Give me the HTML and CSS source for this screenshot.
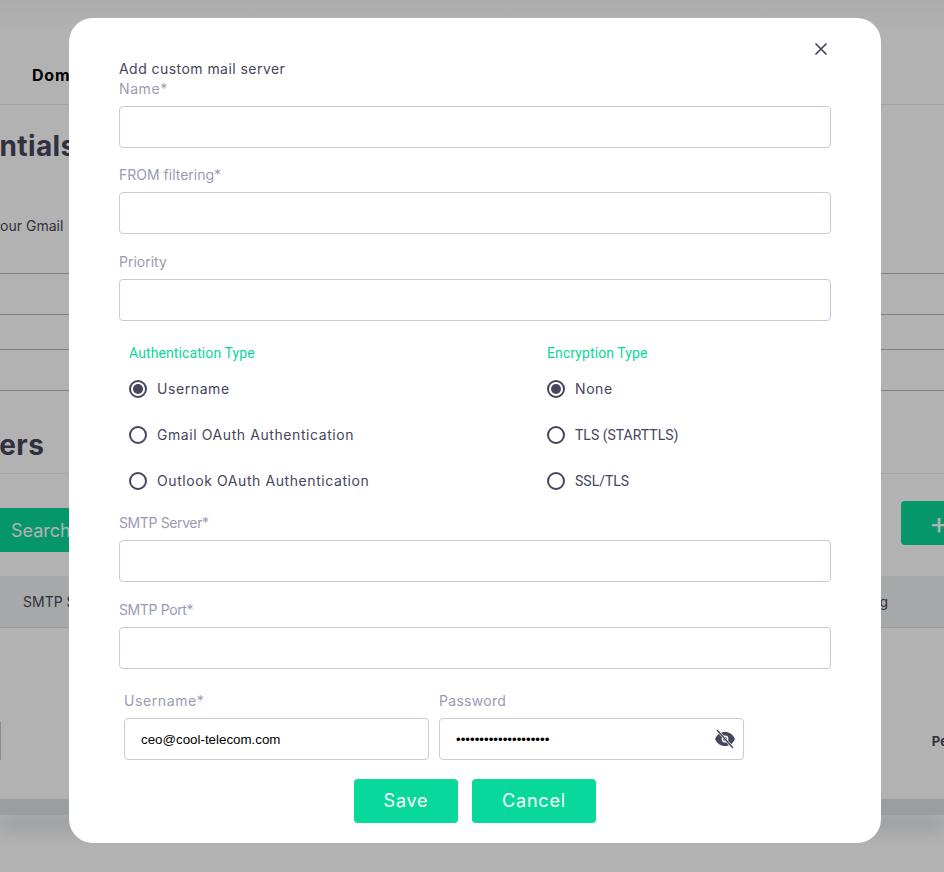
FILE: index.html
```html
<!DOCTYPE html>
<html lang="en">
<head>
    <meta charset="UTF-8">
    <meta name="viewport" content="width=device-width, initial-scale=1.0">
    <title>Add custom mail server</title>
    <link rel="stylesheet" href="styles.css">
</head>
<body>
    <div class="page">
        <div class="topbar"><span class="topbar_link">Domains</span></div>
        <h1 class="page_title title_one">Credentials</h1>
        <p class="page_text">Enter your Gmail</p>
        <div class="cred_rows">
            <div class="cred_row row_a"></div>
            <div class="cred_row row_b"></div>
            <div class="cred_row row_c"></div>
        </div>
        <h1 class="page_title title_two">Servers</h1>
        <div class="toolbar">
            <button class="search_btn">Search</button>
            <button class="plus_btn">+</button>
        </div>
        <div class="table_head"><span>SMTP Server</span><span>Priority filtering</span></div>
        <div class="table_row">
            <div class="row_box"></div>
            <b class="row_end">Pending</b>
        </div>
        <div class="footer_band"></div>
    </div>

    <div class="overlay">
        <div class="modal">
            <button class="close_btn" aria-label="Close">
                <svg width="14" height="14" viewBox="0 0 14 14"><path d="M1.5 1.5l11 11M12.5 1.5l-11 11" stroke="#45465c" stroke-width="1.7" fill="none"/></svg>
            </button>
            <div class="modal_title">Add custom mail server</div>

            <div class="field field_a"><label class="wide">Name*</label><input type="text"></div>
            <div class="field field_b"><label>FROM filtering*</label><input type="text"></div>
            <div class="field"><label>Priority</label><input type="text"></div>

            <div class="radio_box">
                <div class="radio_col">
                    <div class="radio_head">Authentication Type</div>
                    <div class="radio_row"><span class="radio checked"></span><span class="radio_txt">Username</span></div>
                    <div class="radio_row"><span class="radio"></span><span class="radio_txt">Gmail OAuth Authentication</span></div>
                    <div class="radio_row"><span class="radio"></span><span class="radio_txt">Outlook OAuth Authentication</span></div>
                </div>
                <div class="radio_col">
                    <div class="radio_head">Encryption Type</div>
                    <div class="radio_row"><span class="radio checked"></span><span class="radio_txt">None</span></div>
                    <div class="radio_row"><span class="radio"></span><span class="radio_txt caps">TLS (STARTTLS)</span></div>
                    <div class="radio_row"><span class="radio"></span><span class="radio_txt caps">SSL/TLS</span></div>
                </div>
            </div>

            <div class="field"><label class="tight">SMTP Server*</label><input type="text"></div>
            <div class="field"><label class="tight">SMTP Port*</label><input type="text"></div>

            <div class="login_box">
                <div class="login_field"><label class="wide">Username*</label><input type="text" value="ceo@cool-telecom.com"></div>
                <div class="login_field">
                    <label class="mid">Password</label>
                    <div class="pw_wrap">
                        <input type="password" value="abcdefghijklmnopqrst">
                        <svg class="pw_eye" width="22" height="20" viewBox="0 0 22 20">
                            <path d="M1 10C3 5.6 6.6 3 11 3s8 2.6 10 7c-2 4.4-5.6 7-10 7S3 14.4 1 10z" fill="#45465c"/>
                            <circle cx="11" cy="10" r="3.4" fill="#fff"/>
                            <circle cx="11" cy="10" r="2" fill="#45465c"/>
                            <path d="M4 2l15 17" stroke="#fff" stroke-width="2.6"/>
                            <path d="M3 1l16 18" stroke="#45465c" stroke-width="1.4"/>
                        </svg>
                    </div>
                </div>
            </div>

            <div class="btn_box">
                <button class="green_btn save">Save</button>
                <button class="green_btn cancel">Cancel</button>
            </div>
        </div>
    </div>
</body>
</html>
```

FILE: styles.css
```css
*{
    margin:0;
    padding:0;
    box-sizing:border-box;
}
html,body{
    height:100%;
    overflow:hidden;
}
body{
    background:#fff;
    font-family:"Inter","Noto Sans",sans-serif;
    font-size:14px;
    color:#45465c;
}
button{
    font-family:inherit;
    border:none;
}

/* page behind the dialog */
.page{
    height:872px;
    overflow:hidden;
    display:flex;
    flex-direction:column;
}
.topbar{
    height:105px;
    padding:61px 0 0 32px;
    border-bottom:1px solid #e8e8ec;
    background:linear-gradient(#f6f7f8,#fff 30px);
}
.topbar_link{
    font-size:16px;
    line-height:28px;
    font-weight:700;
    color:#000;
    letter-spacing:.8px;
}
.page_title{
    font-size:28px;
    line-height:36px;
    font-weight:700;
    color:#45465c;
    white-space:nowrap;
}
.title_one{
    margin:23px 0 0 -85px;
    letter-spacing:.4px;
}
.page_text{
    margin-top:52px;
    margin-left:-46px;
    line-height:20px;
    white-space:nowrap;
}
.cred_rows{
    margin-top:37px;
    border-top:1px solid #b4b4bc;
}
.cred_row{
    border-bottom:1px solid #b4b4bc;
}
.row_a{height:41px;}
.row_b{height:35px;}
.row_c{height:41px;}
.title_two{
    margin:36px 0 0 -66px;
    letter-spacing:.5px;
}
.toolbar{
    margin-top:10px;
    height:103px;
    border-top:1px solid #eeeef2;
    padding-top:27px;
    display:flex;
    justify-content:space-between;
    align-items:flex-start;
}
.search_btn{
    margin-top:7px;
    width:80px;
    height:44px;
    background:#08d899;
    color:#fff;
    font-size:18px;
    text-align:left;
    padding-left:11px;
}
.plus_btn{
    width:43px;
    height:44px;
    background:#08d899;
    color:#fff;
    font-size:30px;
    text-align:left;
    padding-left:28px;
    border-radius:4px 0 0 4px;
}
.table_head{
    height:52px;
    background:#f0f1f3;
    border-bottom:1px solid #ddd;
    padding:0 56px 0 23px;
    display:flex;
    justify-content:space-between;
    align-items:center;
    font-size:14px;
}
.table_row{
    height:171px;
    display:flex;
    justify-content:space-between;
    align-items:center;
    padding-top:55px;
}
.row_box{
    width:1px;
    height:38px;
    background:#c4c4cc;
}
.row_end{
    margin-right:-40px;
    font-size:13px;
    color:#45465c;
}
.footer_band{
    height:16px;
    background:#dfe2e6;
    box-shadow:0 16px 16px #dfe2e6;
}

/* dialog */
.overlay{
    position:fixed;
    top:0;
    left:0;
    width:100%;
    height:100%;
    background:rgba(0,0,0,.3);
    padding:18px 0 0 69px;
}
.modal{
    position:relative;
    width:812px;
    height:825px;
    background:#fff;
    border-radius:24px;
    padding:41px 50px 20px;
}
.close_btn{
    position:absolute;
    top:24px;
    right:53px;
    width:14px;
    height:14px;
    background:none;
    display:flex;
}
.modal_title{
    line-height:20px;
    letter-spacing:.45px;
}
label{
    display:block;
    line-height:20px;
    margin-bottom:7px;
    color:#9a9bb3;
}
label.wide{letter-spacing:.6px;}
label.mid{letter-spacing:.3px;}
label.tight{letter-spacing:-.38px;}
input{
    display:block;
    width:100%;
    height:42px;
    border:1px solid #c9c9dc;
    border-radius:4px;
    padding:2px 16px 0;
    outline:none;
    font-family:"Liberation Sans",Arial,sans-serif;
    font-size:13.33px;
    color:#000;
    background:#fff;
}
.field{
    margin-bottom:17.5px;
}
.field_a{
    margin-bottom:17px;
}
.field_b{
    margin-bottom:18px;
}
.radio_box{
    display:grid;
    grid-template-columns:418px 1fr;
    padding:4.5px 0 9px 10px;
}
.radio_head{
    font-family:"Roboto",sans-serif;
    line-height:20px;
    color:#08d899;
    margin-bottom:3px;
    letter-spacing:.1px;
}
.radio_row{
    height:46px;
    display:flex;
    align-items:center;
    gap:10px;
}
.radio_txt{
    margin-bottom:2px;
    letter-spacing:.58px;
}
.radio_txt.caps{
    font-family:"Roboto",sans-serif;
    letter-spacing:0;
    margin-bottom:0;
}
.radio{
    width:18px;
    height:18px;
    border:2px solid #45465c;
    border-radius:50%;
    display:flex;
    align-items:center;
    justify-content:center;
}
.radio.checked::after{
    content:"";
    width:10px;
    height:10px;
    border-radius:50%;
    background:#45465c;
}
.login_box{
    display:flex;
    gap:10px;
    padding:4.5px 0 0 5px;
}
.login_field{
    width:305px;
}
.pw_wrap{
    position:relative;
}
.pw_eye{
    position:absolute;
    top:11px;
    right:8px;
}
.btn_box{
    margin-top:19px;
    display:flex;
    justify-content:center;
    gap:14px;
}
.green_btn{
    height:44px;
    background:#08d899;
    color:#fff;
    font-size:18px;
    border-radius:4px;
    letter-spacing:.8px;
}
.save{width:104px;}
.cancel{width:124px;}
```
